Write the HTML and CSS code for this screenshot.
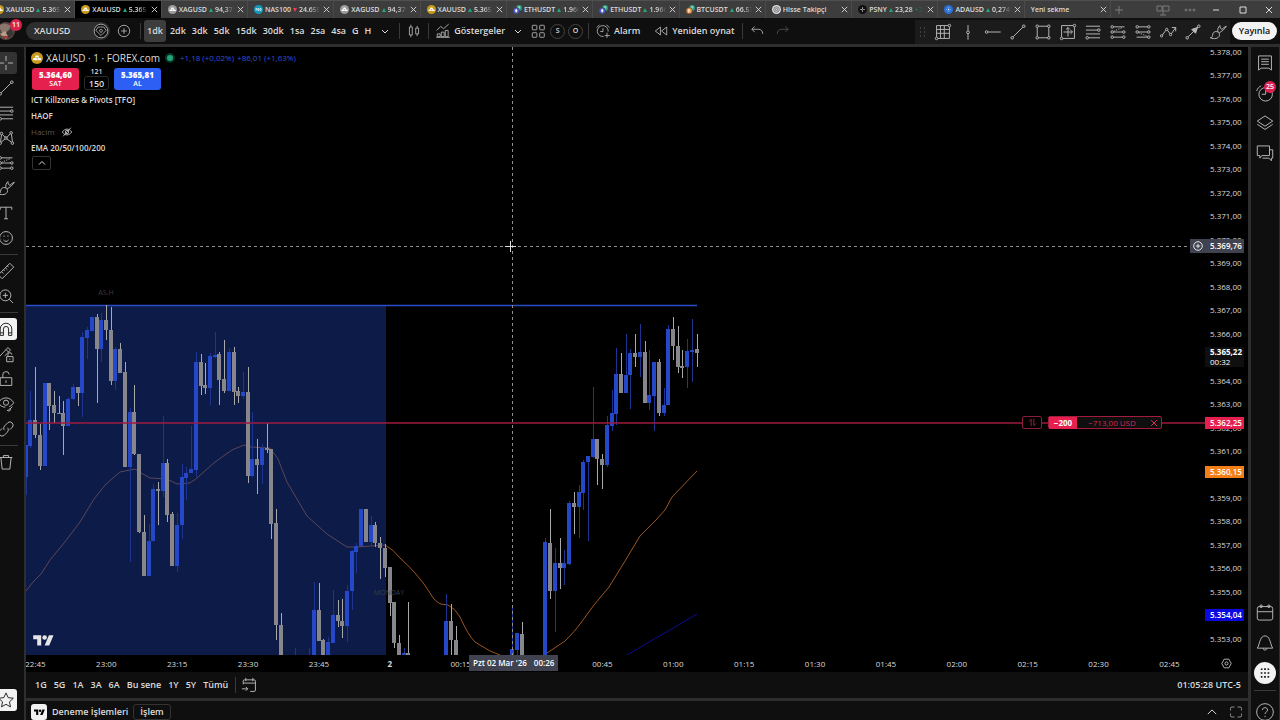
FILE: index.html
```html
<!DOCTYPE html>
<html lang="tr">
<head>
  <meta charset="UTF-8">
  <meta name="viewport" content="width=device-width, initial-scale=1.0">
  <title>XAUUSD</title>
  <link rel="stylesheet" href="styles.css">
</head>
<body>

<!-- icons -->
<svg class="sprite" aria-hidden="true">
  <symbol id="i-close" viewBox="0 0 10 10"><path d="M2 2l6 6M8 2l-6 6"/></symbol>
  <symbol id="i-down" viewBox="0 0 10 10"><path d="M2 4l3 3 3-3"/></symbol>
  <symbol id="i-up" viewBox="0 0 10 10"><path d="M2 6.500l3-3 3 3"/></symbol>
  <symbol id="i-swap" viewBox="0 0 10 10"><path d="M1 4l2.500-2.500V9M6.500 1v7.500L9 6"/></symbol>
  <symbol id="i-gold" viewBox="0 0 14 14"><circle cx="7" cy="7" r="7" fill="#c9991c" stroke="none"/><path d="M5.500 4h3l1 2.500h-5zM3 7h3.500l1 2.500H2zM7.800 7h3.500l1 2.500H7.500z" fill="#fff" stroke="none"/></symbol>
  <symbol id="i-silver" viewBox="0 0 14 14"><circle cx="7" cy="7" r="7" fill="#9c9c9f" stroke="none"/><path d="M5.500 4h3l1 2.500h-5zM3 7h3.500l1 2.500H2zM7.800 7h3.500l1 2.500H7.500z" fill="#fff" stroke="none"/></symbol>
  <symbol id="i-nas" viewBox="0 0 14 14"><circle cx="7" cy="7" r="7" fill="#1497b8" stroke="none"/><path d="M3 5.500v3M3 5.500h1.500v3M6 5.500h1.700v3H6zM9.300 5.500H11v3H9.300z" stroke="#fff"/></symbol>
  <symbol id="i-eth" viewBox="0 0 14 14"><circle cx="9.500" cy="4.500" r="4.500" fill="#26a17b" stroke="none"/><path d="M7.500 3h4M9.500 3v4" stroke="#fff"/><circle cx="5" cy="9" r="5" fill="#4f5bd5" stroke="#3d3d3d"/><path d="M5 5.500l2 3.500-2 3-2-3z" fill="#fff" stroke="none"/></symbol>
  <symbol id="i-btc" viewBox="0 0 14 14"><circle cx="9.500" cy="4.500" r="4.500" fill="#26a17b" stroke="none"/><path d="M7.500 3h4M9.500 3v4" stroke="#fff"/><circle cx="5" cy="9" r="5" fill="#f09035" stroke="#3d3d3d"/><path d="M4 6.500v5M4 7h1.700q1 1-.2 2H4m1.500 0q1.500 1 0 2H4" stroke="#fff"/></symbol>
  <symbol id="i-target" viewBox="0 0 14 14"><circle cx="7" cy="7" r="7" fill="#dcdcdc" stroke="none"/><circle cx="7" cy="7" r="4.300" stroke="#444"/><circle cx="7" cy="7" r="1.800" stroke="#444"/></symbol>
  <symbol id="i-psny" viewBox="0 0 14 14"><circle cx="7" cy="7" r="7" fill="#111" stroke="none"/><path d="M7 3.500v3M7 8v2.500M3.500 7h3M8 7h2.500" stroke="#fff"/></symbol>
  <symbol id="i-ada" viewBox="0 0 14 14"><circle cx="7" cy="7" r="7" fill="#2a6fd6" stroke="none"/><circle cx="7" cy="7" r="3" stroke="#cfe0ff" stroke-dasharray="1 1"/><circle cx="7" cy="7" r="1" fill="#fff" stroke="none"/></symbol>

  <symbol id="i-cross" viewBox="0 0 28 28"><path d="M14 3v8M14 17v8M3 14h8M17 14h8"/></symbol>
  <symbol id="i-trend" viewBox="0 0 28 28"><path d="M6.500 21.500l15-15"/><circle cx="5" cy="23" r="2"/><circle cx="23" cy="5" r="2"/></symbol>
  <symbol id="i-fib" viewBox="0 0 28 28"><path d="M3 5h22M3 11h18M3 17h22M7 23h18"/><circle cx="23" cy="11" r="2"/><circle cx="5" cy="23" r="2"/></symbol>
  <symbol id="i-pattern" viewBox="0 0 28 28"><path d="M5.500 20L7 9M8.500 8.500L12.500 13M15.500 13l5-5.500M22.500 8l1.500 12M6.500 20.500L12.500 15.500M15.500 15.500l7 5"/><circle cx="7" cy="7" r="2"/><circle cx="5" cy="22" r="2"/><circle cx="22" cy="6" r="2"/><circle cx="24" cy="22" r="2"/><circle cx="14" cy="14" r="2"/></symbol>
  <symbol id="i-forecast" viewBox="0 0 28 28"><path d="M7 6h17M7 14h14M7 22h14"/><path d="M7 13l14-6" stroke-dasharray="2 2"/><circle cx="5" cy="6" r="2"/><circle cx="5" cy="14" r="2"/><circle cx="5" cy="22" r="2"/><circle cx="23" cy="14" r="2"/><circle cx="23" cy="22" r="2"/></symbol>
  <symbol id="i-forecast2" viewBox="0 0 28 28"><path d="M7 6h14M7 14h14M4 22h17"/><path d="M7 15l14 6" stroke-dasharray="2 2"/><circle cx="5" cy="6" r="2"/><circle cx="5" cy="14" r="2"/><circle cx="23" cy="6" r="2"/><circle cx="23" cy="14" r="2"/><circle cx="23" cy="22" r="2"/></symbol>
  <symbol id="i-brush" viewBox="0 0 28 28"><path d="M2 23c4 0 3-3 4-6 1-4 6-5 9-2s1 8-4 9c-3 .500-6 .500-9-1zM14 14c-1-4 0-7 3-10 0 3 1 5 3 6 2-2 4-4 7-5-3 4-6 8-11 10"/></symbol>
  <symbol id="i-text" viewBox="0 0 28 28"><path d="M5 9V5h18v4M14 5v18M11 23h6"/></symbol>
  <symbol id="i-smile" viewBox="0 0 28 28"><circle cx="14" cy="14" r="10"/><path d="M10 17c2 3 6 3 8 0M11 10v2M17 10v2"/></symbol>
  <symbol id="i-ruler" viewBox="0 0 28 28"><path d="M2 20L20 2l6 6L8 26zM7 15l3 3M10 12l2 2M13 9l3 3M16 6l2 2"/></symbol>
  <symbol id="i-zoom" viewBox="0 0 28 28"><circle cx="13" cy="13" r="8.500"/><path d="M19 19l6 6M13 9v8M9 13h8"/></symbol>
  <symbol id="i-magnet" viewBox="0 0 28 28"><path d="M5 24V14a9 9 0 0 1 18 0v10h-5V14a4 4 0 0 0-8 0v10zM5 20h5M18 20h5"/></symbol>
  <symbol id="i-penlock" viewBox="0 0 28 28"><path d="M2 20L17 4l4 4-9 9M4 22l-2-2M14 7l4 4M15 18h10v8H15zM17 18v-3a3 3 0 0 1 6 0M20 21v2"/></symbol>
  <symbol id="i-lock" viewBox="0 0 28 28"><path d="M5 12h18v12H5zM9 12V8a5 5 0 0 1 10-1M14 16v4"/></symbol>
  <symbol id="i-eye" viewBox="0 0 28 28"><path d="M2 12c6-10 18-10 24 0-2 3-4 5-7 6M2 12c3 5 7 7 11 7"/><circle cx="14" cy="12" r="4"/><path d="M16 24c3 1 3-4 5-3l3-3M16 24c3 2 6 0 5-3"/></symbol>
  <symbol id="i-link" viewBox="0 0 28 28"><path d="M12 16l-1-1a5 5 0 0 1 1-6l5-5a5 5 0 0 1 7 7l-4 4M16 12l1 1a5 5 0 0 1-1 6l-5 5a5 5 0 0 1-7-7l4-4"/></symbol>
  <symbol id="i-trash" viewBox="0 0 28 28"><path d="M4 7h20M10 7V4h8v3M6 7l2 18h12l2-18"/></symbol>
  <symbol id="i-star" viewBox="0 0 28 28"><path d="M14 3l3.400 7.300 8 1-6 5.500 1.600 7.900-7-4-7 4 1.600-7.900-6-5.500 8-1z"/></symbol>

  <symbol id="i-plus" viewBox="0 0 28 28"><circle cx="14" cy="14" r="10"/><path d="M14 9v10M9 14h10"/></symbol>
  <symbol id="i-candles" viewBox="0 0 28 28"><path d="M6 7h5v14H6zM8.500 3v4M8.500 21v4M17 9h5v10h-5zM19.500 5v4M19.500 19v4"/></symbol>
  <symbol id="i-indicator" viewBox="0 0 28 28"><path d="M3 13l7-7 5 4 9-8M4 24v-5h5v5zM11 24v-8h5v8zM18 24V13h5v11zM2 25h24"/></symbol>
  <symbol id="i-layout" viewBox="0 0 28 28"><rect x="4" y="4" width="8" height="8" rx="1"/><rect x="17" y="4" width="8" height="8" rx="1"/><rect x="4" y="17" width="8" height="8" rx="1"/><rect x="17" y="17" width="8" height="8" rx="1"/></symbol>
  <symbol id="i-alarm" viewBox="0 0 28 28"><path d="M23 15a9.500 9.500 0 1 0-8 8.500M14 9v6H9M3 8l5-5M20 3l5 5M21 17v9M17 22h9"/></symbol>
  <symbol id="i-replay" viewBox="0 0 28 28"><path d="M13 7v14l-9-7zM24 7v14l-9-7z"/></symbol>
  <symbol id="i-undo" viewBox="0 0 28 28"><path d="M10 6l-5 5 5 5M5 11h12c4 0 7 3 7 8"/></symbol>
  <symbol id="i-redo" viewBox="0 0 28 28"><path d="M18 6l5 5-5 5M23 11H11c-4 0-7 3-7 8"/></symbol>
  <symbol id="i-grid" viewBox="0 0 28 28"><path d="M4 4h18M4 10h20M4 16h20M6 24h18M4 4v18M10 4v20M16 4v20M24 6v18"/><circle cx="24" cy="4" r="2"/><circle cx="4" cy="24" r="2"/></symbol>
  <symbol id="i-vline" viewBox="0 0 28 28"><path d="M14 3v9M14 17v9"/><circle cx="14" cy="14.500" r="2.200"/></symbol>
  <symbol id="i-hray" viewBox="0 0 28 28"><path d="M6 14h20"/><circle cx="4" cy="14" r="2"/></symbol>
  <symbol id="i-rect" viewBox="0 0 28 28"><path d="M7 5h14M7 23h14M5 7v14M23 7v14"/><circle cx="5" cy="5" r="2"/><circle cx="23" cy="5" r="2"/><circle cx="5" cy="23" r="2"/><circle cx="23" cy="23" r="2"/></symbol>
  <symbol id="i-range" viewBox="0 0 28 28"><path d="M4 4h18M6 24h18M4 4v18M24 6v18M14 7v14M7 14h14M11 10l3-3 3 3M18 11l3 3-3 3"/><circle cx="24" cy="4" r="2"/><circle cx="4" cy="24" r="2"/></symbol>
  <symbol id="i-wave" viewBox="0 0 28 28"><path d="M5 19l6-8M13 11l4.500 6M19 17l7-10M20 7h6v6"/><circle cx="4" cy="20" r="1.800"/><circle cx="12" cy="10" r="1.800"/><circle cx="18" cy="18" r="1.800"/></symbol>
  <symbol id="i-arrow" viewBox="0 0 28 28"><path d="M6.500 21.500l15-15"/><path d="M21 7l-3 9-6-6z" fill="currentColor"/><circle cx="5" cy="23" r="2"/><circle cx="23" cy="5" r="2"/></symbol>

  <symbol id="i-list" viewBox="0 0 28 28"><path d="M4 3h20v22l-4-3H8l-4 3zM8 8h12M8 12h12M8 16h12"/></symbol>
  <symbol id="i-clock" viewBox="0 0 28 28"><circle cx="15" cy="16" r="10.500"/><path d="M15 9v7h-6M1 11c1-4 4-7 7-8"/></symbol>
  <symbol id="i-layers" viewBox="0 0 28 28"><path d="M14 3l12 8-12 8-12-8zM2 16l12 8 12-8"/></symbol>
  <symbol id="i-chat" viewBox="0 0 28 28"><path d="M2 3h19v15H9l-3 4v-4H2zM21 9h5v13h-2v4l-4-4H10"/></symbol>
  <symbol id="i-calendar" viewBox="0 0 28 28"><rect x="2" y="4" width="24" height="21" rx="3"/><path d="M2 12h24"/><circle cx="8" cy="3.500" r="2"/><circle cx="20" cy="3.500" r="2"/></symbol>
  <symbol id="i-bell" viewBox="0 0 28 28"><path d="M2 22h24c-3-4-3-10-5-13-1-4-4-6-7-6s-6 2-7 6c-2 3-2 9-5 13zM11 22c0 4 6 4 6 0"/></symbol>
  <symbol id="i-apps" viewBox="0 0 28 28"><path d="M4 5h4M12 5h4M20 5h4M4 14h4M12 14h4M20 14h4M4 23h4M12 23h4M20 23h4" stroke-width="4"/></symbol>
  <symbol id="i-help" viewBox="0 0 28 28"><circle cx="14" cy="14" r="13"/><path d="M10 11c0-5 8-5 8 0 0 3-4 3-4 6M14 20v2"/></symbol>
  <symbol id="i-goto" viewBox="0 0 28 28"><path d="M5 13V8q0-2 2-2h15q2 0 2 2v14q0 2-2 2h-6M5 11h19M9 3v5M20 3v5M3 20h9M9 17l3 3-3 3"/></symbol>
  <symbol id="i-gem" viewBox="0 0 28 28"><circle cx="14" cy="14" r="12" fill="#0f0f0f"/><path d="M9 7h10l4 6-9 9-9-9zM11 13l3 4 3-4-3-2z"/></symbol>
  <symbol id="i-hidden" viewBox="0 0 28 28"><path d="M3 14c6-9 16-9 22 0-6 9-16 9-22 0zM5 24L23 4"/><circle cx="14" cy="14" r="4"/></symbol>
  <symbol id="i-gear" viewBox="0 0 28 28"><path d="M8 3h12l6 11-6 11H8L2 14z"/><circle cx="14" cy="14" r="4"/></symbol>
  <symbol id="i-tv" viewBox="0 0 36 28"><path d="M14 22H7V11H0V4h14zM28 22h-8l7.500-18h8z" fill="currentColor" stroke="none"/><circle cx="20" cy="8" r="4" fill="currentColor" stroke="none"/></symbol>
  <symbol id="i-full" viewBox="0 0 28 28"><path d="M3 11V7q0-3 3-3h5M17 4h5q3 0 3 3v4M25 17v4q0 3-3 3h-5M11 24H6q-3 0-3-3v-4"/></symbol>
</svg>

<!-- browser style tabs -->
<div class="tabbar">
  <div class="tabs">
    <div class="tab"><svg><use href="#i-gold"/></svg><b>XAUUSD</b><i class="up"></i><span>5.365,22</span><button aria-label="Kapat"><svg><use href="#i-close"/></svg></button></div>
    <div class="tab active"><svg><use href="#i-gold"/></svg><b>XAUUSD</b><i class="up"></i><span>5.365,22</span><button aria-label="Kapat"><svg><use href="#i-close"/></svg></button></div>
    <div class="tab"><svg><use href="#i-silver"/></svg><b>XAGUSD</b><i class="up"></i><span>94,370</span><button aria-label="Kapat"><svg><use href="#i-close"/></svg></button></div>
    <div class="tab"><svg><use href="#i-nas"/></svg><b>NAS100</b><i class="down"></i><span>24.655,</span><button aria-label="Kapat"><svg><use href="#i-close"/></svg></button></div>
    <div class="tab"><svg><use href="#i-silver"/></svg><b>XAGUSD</b><i class="up"></i><span>94,370</span><button aria-label="Kapat"><svg><use href="#i-close"/></svg></button></div>
    <div class="tab"><svg><use href="#i-gold"/></svg><b>XAUUSD</b><i class="up"></i><span>5.365,22</span><button aria-label="Kapat"><svg><use href="#i-close"/></svg></button></div>
    <div class="tab"><svg><use href="#i-eth"/></svg><b>ETHUSDT</b><i class="up"></i><span>1.966,</span><button aria-label="Kapat"><svg><use href="#i-close"/></svg></button></div>
    <div class="tab"><svg><use href="#i-eth"/></svg><b>ETHUSDT</b><i class="up"></i><span>1.966,</span><button aria-label="Kapat"><svg><use href="#i-close"/></svg></button></div>
    <div class="tab"><svg><use href="#i-btc"/></svg><b>BTCUSDT</b><i class="up"></i><span>66.577</span><button aria-label="Kapat"><svg><use href="#i-close"/></svg></button></div>
    <div class="tab"><svg><use href="#i-target"/></svg><b>Hisse Takipçi</b><span></span><button aria-label="Kapat"><svg><use href="#i-close"/></svg></button></div>
    <div class="tab"><svg><use href="#i-psny"/></svg><b>PSNY</b><i class="up"></i><span>23,28 <em>+25</em></span><button aria-label="Kapat"><svg><use href="#i-close"/></svg></button></div>
    <div class="tab"><svg><use href="#i-ada"/></svg><b>ADAUSD</b><i class="up"></i><span>0,2740</span><button aria-label="Kapat"><svg><use href="#i-close"/></svg></button></div>
    <div class="tab"><b>Yeni sekme</b><span></span><button aria-label="Kapat"><svg><use href="#i-close"/></svg></button></div>
  </div>
  <div class="window-controls">
    <button class="dim" aria-label="Yeni sekme"><svg viewBox="0 0 14 14"><path d="M7 3v8M3 7h8"/></svg></button>
    <button class="dim panes" aria-label="Paneller"><svg viewBox="0 0 14 14"><path d="M1 3h5v5H1zM7 3h6v5H7zM7 8v4M4 12h6"/></svg></button>
    <button class="dim" aria-label="Menü"><svg viewBox="0 0 14 14"><circle cx="3" cy="7" r="1"/><circle cx="7" cy="7" r="1"/><circle cx="11" cy="7" r="1"/></svg></button>
    <button aria-label="Küçült"><svg viewBox="0 0 14 14"><path d="M4 7h6"/></svg></button>
    <button aria-label="Büyüt"><svg viewBox="0 0 14 14"><path d="M4 4h6v6H4z"/></svg></button>
    <button aria-label="Kapat"><svg viewBox="0 0 14 14"><path d="M4 4l6 6M10 4l-6 6"/></svg></button>
  </div>
</div>

<!-- top toolbar -->
<header class="toolbar">
  <a class="avatar" href="#" aria-label="Profil"><svg viewBox="0 0 18 18"><circle cx="9" cy="9" r="9" fill="#5b4640" stroke="none"/><g stroke="none"><path d="M2 4q5-5 12 0l-3 5-6 2z" fill="#8b766c"/><path d="M3 12l5-3 4 4-3 4z" fill="#b59d8e"/><path d="M9 11l5-4 3 5-5 4z" fill="#3b3634"/><path d="M6 14h5v2H6z" fill="#a33"/></g></svg><span class="count">11</span></a>
  <button class="symbol-search">XAUUSD <svg class="icon"><use href="#i-gem"/></svg></button>
  <button class="icon-btn" aria-label="Karşılaştır"><svg class="icon"><use href="#i-plus"/></svg></button>
  <span class="sep"></span>
  <nav class="intervals">
    <button class="active">1dk</button>
    <button>2dk</button>
    <button>3dk</button>
    <button>5dk</button>
    <button>15dk</button>
    <button>30dk</button>
    <button>1sa</button>
    <button>2sa</button>
    <button>4sa</button>
    <button>G</button>
    <button>H</button>
    <button class="more" aria-label="Zaman aralığı"><svg class="chev"><use href="#i-down"/></svg></button>
  </nav>
  <span class="sep"></span>
  <button class="icon-btn" aria-label="Mumlar"><svg class="icon"><use href="#i-candles"/></svg></button>
  <span class="sep"></span>
  <button class="tool"><svg class="icon"><use href="#i-indicator"/></svg>Göstergeler</button>
  <button class="icon-btn" aria-label="Şablonlar"><svg class="chev"><use href="#i-down"/></svg></button>
  <button class="icon-btn" aria-label="Düzen"><svg class="icon"><use href="#i-layout"/></svg></button>
  <button class="round">S</button>
  <button class="round">O</button>
  <span class="sep"></span>
  <button class="tool"><svg class="icon"><use href="#i-alarm"/></svg>Alarm</button>
  <button class="tool"><svg class="icon"><use href="#i-replay"/></svg>Yeniden oynat</button>
  <span class="sep"></span>
  <button class="icon-btn" aria-label="Geri al"><svg class="icon"><use href="#i-undo"/></svg></button>
  <button class="icon-btn off" aria-label="Yinele"><svg class="icon"><use href="#i-redo"/></svg></button>

  <div class="favorites">
    <svg class="grip" viewBox="0 0 8 12"><path d="M1 2h1M5 2h1M1 6h1M5 6h1M1 10h1M5 10h1"/></svg>
    <button aria-label="Izgara"><svg class="icon"><use href="#i-grid"/></svg></button>
    <button aria-label="Dikey çizgi"><svg class="icon"><use href="#i-vline"/></svg></button>
    <button aria-label="Yatay ışın"><svg class="icon"><use href="#i-hray"/></svg></button>
    <button aria-label="Trend çizgisi"><svg class="icon"><use href="#i-trend"/></svg></button>
    <button aria-label="Dikdörtgen"><svg class="icon"><use href="#i-rect"/></svg></button>
    <button aria-label="Aralık"><svg class="icon"><use href="#i-range"/></svg></button>
    <button aria-label="Fibonacci"><svg class="icon"><use href="#i-fib"/></svg></button>
    <button aria-label="Uzun pozisyon"><svg class="icon"><use href="#i-forecast"/></svg></button>
    <button aria-label="Kısa pozisyon"><svg class="icon"><use href="#i-forecast2"/></svg></button>
    <button aria-label="Yol"><svg class="icon"><use href="#i-wave"/></svg></button>
    <button aria-label="Ok"><svg class="icon"><use href="#i-arrow"/></svg></button>
    <button aria-label="Fırça"><svg class="icon"><use href="#i-brush"/></svg></button>
  </div>
  <button class="publish">Yayınla</button>
</header>

<main class="workspace">
  <!-- drawing tools -->
  <aside class="rail left">
    <button class="pressed" aria-label="İmleç"><svg class="icon"><use href="#i-cross"/></svg></button>
    <button aria-label="Trend çizgisi"><svg class="icon"><use href="#i-trend"/></svg></button>
    <button aria-label="Fibonacci"><svg class="icon"><use href="#i-fib"/></svg></button>
    <button aria-label="Formasyon"><svg class="icon"><use href="#i-pattern"/></svg></button>
    <button aria-label="Tahmin"><svg class="icon"><use href="#i-forecast"/></svg></button>
    <button aria-label="Fırça"><svg class="icon"><use href="#i-brush"/></svg></button>
    <button aria-label="Metin"><svg class="icon"><use href="#i-text"/></svg></button>
    <button aria-label="Simgeler"><svg class="icon"><use href="#i-smile"/></svg></button>
    <hr>
    <button aria-label="Cetvel"><svg class="icon"><use href="#i-ruler"/></svg></button>
    <button aria-label="Yakınlaştır"><svg class="icon"><use href="#i-zoom"/></svg></button>
    <hr>
    <button class="white" aria-label="Mıknatıs"><svg class="icon"><use href="#i-magnet"/></svg></button>
    <button aria-label="Çizim modu"><svg class="icon"><use href="#i-penlock"/></svg></button>
    <button aria-label="Kilitle"><svg class="icon"><use href="#i-lock"/></svg></button>
    <button aria-label="Gizle"><svg class="icon"><use href="#i-eye"/></svg></button>
    <button aria-label="Bağla"><svg class="icon"><use href="#i-link"/></svg></button>
    <hr>
    <button aria-label="Sil"><svg class="icon"><use href="#i-trash"/></svg></button>
    <button class="white last" aria-label="Favoriler"><svg class="icon"><use href="#i-star"/></svg></button>
  </aside>

  <div class="center">
    <section class="chart">
      <div class="plot">
        <svg class="canvas">
          <g id="scene" transform="translate(-26 -47)">
            <path class="ema" d="M26 591L33 582 41 574 50 560 64 543 80 522 94 499 106 484 120 472 135 469 141 473 150 478 167 479 177 484 190 483 197 478 215 462 232 450 244 445 250 447 270 448 278 459 287 482 307 516 327 534 347 547 357 547 385 545Q393 549 400 558 408 565 415 573 424 583 430 593 435 602 441 604L448 605Q455 608 460 617 468 635 475 642L490 651 500 655M547 653L565 641Q575 631 580 624L594 605 609 587 625 561 640 536 656 520 665 510 672 497 697 471"/>
            <path class="ema-slow" d="M627 655L697 614"/>
            <rect class="session" x="26" y="305" width="360" height="350"/>
            <path class="high" d="M26 305.500H697"/>
            <g id="candles"></g>
            <path class="order-line" d="M26 423H4000"/>
            <text x="106" y="295">AS.H</text>
            <text x="389" y="595">MONDAY</text>
            <path class="cross" d="M26 246.500H4000M512.500 47V4000"/>
            <path class="cursor" d="M505 246.500h11M510.500 241v11"/>
          </g>
        </svg>

        <div class="legend">
          <div class="title"><svg class="logo"><use href="#i-gold"/></svg><h1>XAUUSD · 1 · FOREX.com</h1><i class="status"></i><span class="change">+1,18 (+0,02%)</span><span class="change">+86,01 (+1,63%)</span></div>
          <div class="trade">
            <button class="sell"><b>5.364,60</b>SAT</button>
            <label class="qty">121<input type="text" value="150"></label>
            <button class="buy"><b>5.365,81</b>AL</button>
          </div>
          <ul>
            <li>ICT Killzones &amp; Pivots [TFO]</li>
            <li>HAOF</li>
            <li class="muted">Hacim <svg class="eye"><use href="#i-hidden"/></svg></li>
            <li>EMA 20/50/100/200</li>
          </ul>
          <button class="collapse" aria-label="Göstergeleri gizle"><svg class="chev"><use href="#i-up"/></svg></button>
        </div>

        <div class="order">
          <button class="side" aria-label="Ters çevir"><svg class="chev"><use href="#i-swap"/></svg></button>
          <div class="position"><b>−200</b><span>−713,00 USD</span><button aria-label="Pozisyonu kapat"><svg class="chev"><use href="#i-close"/></svg></button></div>
        </div>
        <svg class="tv-logo"><use href="#i-tv"/></svg>
      </div>

      <div class="price-axis">
        <ol id="prices"></ol>
        <div class="tag cursor-tag"><svg><use href="#i-plus"/></svg><span>5.369,76</span></div>
        <div class="tag last-tag"><b>5.365,22</b>00:32</div>
        <div class="tag order-tag">5.362,25</div>
        <div class="tag ema-tag">5.360,15</div>
        <div class="tag slow-tag">5.354,04</div>
      </div>
    </section>

    <div class="time-axis">
      <div class="times">
        <ol>
          <li>22:45</li><li>23:00</li><li>23:15</li><li>23:30</li><li>23:45</li><li><b>2</b></li><li>00:15</li><li>00:30</li><li>00:45</li><li>01:00</li><li>01:15</li><li>01:30</li><li>01:45</li><li>02:00</li><li>02:15</li><li>02:30</li><li>02:45</li>
        </ol>
        <div class="time-tag"><span>Pzt 02 Mar '26</span><span>00:26</span></div>
      </div>
      <button class="gear" aria-label="Ayarlar"><svg><use href="#i-gear"/></svg></button>
    </div>

    <div class="ranges">
      <button>1G</button>
      <button>5G</button>
      <button>1A</button>
      <button>3A</button>
      <button>6A</button>
      <button>Bu sene</button>
      <button>1Y</button>
      <button>5Y</button>
      <button>Tümü</button>
      <span class="sep"></span>
      <button aria-label="Tarihe git"><svg class="icon"><use href="#i-goto"/></svg></button>
      <span class="clock">01:05:28 UTC-5</span>
    </div>

    <footer class="account">
      <span class="badge"><svg><use href="#i-tv"/></svg></span>
      <a href="#">Deneme İşlemleri</a>
      <button class="deal">İşlem</button>
      <button class="icon-only" aria-label="Paneli aç"><svg class="chev"><use href="#i-up"/></svg></button>
      <button class="icon-only" aria-label="Tam ekran"><svg class="icon"><use href="#i-full"/></svg></button>
    </footer>
  </div>

  <!-- widget bar -->
  <aside class="rail right">
    <button aria-label="İzleme listesi"><svg class="icon"><use href="#i-list"/></svg></button>
    <button aria-label="Alarmlar"><svg class="icon"><use href="#i-clock"/></svg><span class="count">25</span></button>
    <button aria-label="Nesneler"><svg class="icon"><use href="#i-layers"/></svg></button>
    <button aria-label="Sohbet"><svg class="icon"><use href="#i-chat"/></svg></button>
    <button class="last" aria-label="Takvim"><svg class="icon"><use href="#i-calendar"/></svg></button>
    <button aria-label="Bildirimler"><svg class="icon"><use href="#i-bell"/></svg></button>
    <button class="apps" aria-label="Ürünler"><svg class="icon"><use href="#i-apps"/></svg></button>
    <hr>
    <button aria-label="Yardım"><svg class="icon"><use href="#i-help"/></svg></button>
  </aside>
</main>

<script src="script.js"></script>
</body>
</html>
```
FILE: styles.css
```css
:root {
  --bg: #0f0f0f;
  --line: #2e2e2e;
  --text: #dbdbdb;
  --icon: #b8b8b8;
  --red: #e5204f;
  --blue: #2d5ff5;
}

* {
  box-sizing: border-box;
}

body {
  margin: 0;
  height: 100vh;
  display: flex;
  flex-direction: column;
  overflow: hidden;
  background: var(--bg);
  color: var(--text);
  font: 600 9px/12px "Open Sans", "Noto Sans", sans-serif;
}

button,
input {
  font: inherit;
  color: inherit;
  background: none;
  border: 0;
  padding: 0;
  margin: 0;
}

button {
  display: flex;
  align-items: center;
  justify-content: center;
  white-space: nowrap;
}

a {
  color: inherit;
  text-decoration: none;
}

ol,
ul {
  list-style: none;
  margin: 0;
  padding: 0;
}

svg {
  fill: none;
  stroke: currentColor;
  flex: none;
}

.sprite {
  display: none;
}

.icon {
  width: 18px;
  height: 18px;
  color: var(--icon);
  stroke-width: 1.5;
}

.chev {
  width: 10px;
  height: 10px;
}

.sep {
  width: 1px;
  height: 16px;
  background: #393939;
}

.count {
  position: absolute;
  top: -3px;
  left: 10px;
  min-width: 12px;
  padding: 0 2px;
  border-radius: 6px;
  background: #d9224f;
  color: #fff;
  font-size: 7px;
  line-height: 12px;
  text-align: center;
}

/* tabs */
.tabbar {
  display: flex;
  height: 18px;
  background: #3d3d3d;
  border-top: 1px solid #505050;
  font-size: 7px;
}

.tabs {
  flex: 1;
  display: flex;
  margin-left: -11px;
  min-width: 0;
}

.tab {
  flex: 1 1 0;
  min-width: 0;
  display: flex;
  align-items: center;
  gap: 2px;
  padding: 0 2px 0 6px;
  border-right: 1px solid #4a4a4a;
}

.tab.active {
  background: #000;
}

.tab > svg {
  width: 9px;
  height: 9px;
}

.tab b {
  font-weight: 600;
  white-space: nowrap;
}

.tab span {
  flex: 1;
  min-width: 0;
  overflow: hidden;
  white-space: nowrap;
  mask-image: linear-gradient(90deg, #000 50%, transparent);
}

.tab em {
  color: #20a67a;
  font-style: normal;
}

.tab button svg {
  width: 9px;
  height: 9px;
}

.up,
.down {
  border: 2px solid transparent;
  border-bottom: 4px solid #20a67a;
  border-top: 0;
}

.down {
  border-bottom: 0;
  border-top: 4px solid #f23655;
}

.window-controls {
  width: 169px;
  display: flex;
  align-items: center;
  justify-content: space-between;
  padding: 0 4px 0 1px;
}

.window-controls svg {
  width: 14px;
  height: 14px;
}

.window-controls .dim {
  color: #7a7a7a;
}

.window-controls .panes {
  margin-left: 18px;
}

/* toolbar */
.toolbar {
  display: flex;
  align-items: center;
  height: 29px;
  padding-right: 3px;
  border-bottom: 3px solid var(--line);
}

.toolbar .icon {
  width: 16px;
  height: 16px;
}

.avatar {
  position: relative;
  margin-left: -3px;
  width: 18px;
  height: 18px;
}

.avatar .count {
  left: 13px;
}

.symbol-search {
  width: 84px;
  height: 18px;
  margin: 0 4px 0 11px;
  padding: 0 1px 0 8px;
  border-radius: 9px;
  background: #2e2e2e;
  justify-content: space-between;
}

.icon-btn {
  width: 20px;
  height: 22px;
}

.toolbar > .sep {
  margin: 0 4px;
}

.toolbar > .symbol-search + .icon-btn + .sep {
  margin: 0 3px 0 6px;
}

.intervals {
  display: flex;
}

.intervals button {
  height: 22px;
  padding: 0 3px;
  border-radius: 3px;
}

.intervals .active {
  margin-right: 1px;
  background: #3d3d3d;
}

.intervals .more {
  padding: 0 5px 0 6px;
}

.tool {
  gap: 3px;
  padding: 0 3px 0 2px;
}

.tool + .tool {
  margin-left: 8px;
}

.round {
  width: 15px;
  height: 15px;
  margin: 0 1px 0 2px;
  border: 1px solid #444;
  border-radius: 50%;
  font-size: 7px;
}

.off {
  margin-left: 6px;
  opacity: .4;
}

.favorites {
  display: flex;
  align-items: center;
  gap: 7px;
  height: 24px;
  margin: 2px 2px 0 auto;
  padding: 0 3px 0 4px;
  background: #1b1b1b;
}

.favorites .icon {
  width: 18px;
  height: 18px;
}

.grip {
  width: 8px;
  height: 12px;
  color: #666;
}

.publish {
  width: 45px;
  height: 18px;
  border-radius: 9px;
  background: #f2f2f2;
  color: #0f0f0f;
}

/* workspace */
.workspace {
  flex: 1;
  min-height: 0;
  display: flex;
}

.rail {
  flex: none;
  display: flex;
  flex-direction: column;
  gap: 3px;
}

.rail .last {
  margin-top: auto;
}

.rail hr {
  width: 18px;
  height: 1px;
  margin: 2px 0;
  border: 0;
  background: #3a3a3a;
}

.left {
  width: 26px;
  padding: 5px 0 9px;
  border-right: 2px solid var(--line);
}

.left button {
  width: 22px;
  height: 22px;
  margin-left: -5px;
  border-radius: 3px;
}

.left .pressed {
  background: #333;
}

.left .white {
  background: #f2f2f2;
}

.left .white .icon {
  color: #222;
}

.right {
  width: 32px;
  align-items: center;
  gap: 5px;
  padding: 3px 0 0;
  border-left: 3px solid var(--line);
  border-right: 1px solid var(--line);
}

.right button {
  position: relative;
  width: 26px;
  height: 25px;
}

.right hr {
  width: 22px;
  margin: 0 0 3px;
}

.right .apps .icon {
  width: 22px;
  height: 22px;
  padding: 5px;
  border-radius: 50%;
  background: #f2f2f2;
  color: #111;
}

.right .count {
  top: 1px;
  left: 12px;
}

.right hr + button {
  margin-bottom: -4px;
}

.center {
  flex: 1;
  min-width: 0;
  display: flex;
  flex-direction: column;
}

.chart {
  flex: 1;
  min-height: 0;
  display: flex;
  background: #000;
}

.plot {
  position: relative;
  flex: 1;
  min-width: 0;
}

.canvas {
  position: absolute;
  width: 100%;
  height: 100%;
}

.canvas text {
  fill: #3c3c44;
  stroke: none;
  font-size: 7px;
  font-weight: 400;
  text-anchor: middle;
}

.ema {
  stroke: #9c5520;
}

.ema-slow {
  stroke: #0c0c98;
}

.session {
  fill: #1a3590;
  fill-opacity: .5;
  stroke: none;
}

.high {
  stroke: #2a4cc8;
  stroke-width: 1.5;
}

.order-line {
  stroke: #9c1b3f;
  stroke-width: 1.6;
}

.cross {
  stroke: #909090;
  stroke-dasharray: 3 3;
}

.cursor {
  stroke: #ddd;
}

.body-up {
  fill: #2448c8;
  stroke: none;
}

.body-down {
  fill: #87878b;
  stroke: none;
}

.wick-up {
  fill: #1d3590;
  stroke: none;
}

.wick-down {
  fill: #a9a9a9;
  stroke: none;
}

/* legend over the chart */
.legend {
  position: absolute;
  top: 3px;
  left: 5px;
  font-size: 8px;
}

.title {
  display: flex;
  align-items: center;
  gap: 3px;
  height: 16px;
}

.title h1 {
  margin: 0;
  font-size: 10px;
  font-weight: 500;
}

.logo {
  width: 12px;
  height: 12px;
}

.status {
  width: 6px;
  height: 6px;
  margin: 0 4px;
  border-radius: 50%;
  background: #20a67a;
  box-shadow: 0 0 0 2px #0a3327;
}

.change {
  color: #2d50dc;
  font-weight: 500;
}

.trade {
  display: flex;
  gap: 5px;
  margin: 2px 0 2px 1px;
}

.sell,
.buy {
  flex-direction: column;
  width: 47px;
  height: 22px;
  border-radius: 3px;
  background: var(--red);
  color: #fff;
  font-size: 7px;
  line-height: 9px;
}

.sell b,
.buy b {
  font-size: 8px;
}

.buy {
  background: var(--blue);
}

.qty {
  width: 25px;
  font-size: 7px;
  line-height: 7px;
  text-align: center;
}

.qty input {
  width: 25px;
  height: 14px;
  margin-top: 1px;
  border: 1px solid #2a2a2a;
  border-radius: 3px;
  font-size: 9px;
  text-align: center;
}

.legend li {
  display: flex;
  align-items: center;
  gap: 6px;
  height: 16px;
}

.legend .muted {
  color: #5a5a5a;
  font-weight: 500;
}

.eye {
  width: 12px;
  height: 12px;
  color: #ccc;
  stroke-width: 2;
}

.collapse {
  width: 19px;
  height: 14px;
  margin-left: 1px;
  border: 1px solid #333;
  border-radius: 2px;
}

.order {
  position: absolute;
  top: 369px;
  right: 43px;
  display: flex;
  gap: 6px;
  color: #d42856;
  font-size: 8px;
  font-weight: 500;
}

.order .side {
  width: 20px;
  border: 1px solid #8a1d3b;
  border-radius: 2px;
  background: #000;
}

.side .chev {
  width: 9px;
  height: 9px;
  stroke-width: .8;
}

.position {
  display: flex;
  align-items: center;
  height: 13px;
  border: 1px solid #a31c40;
  border-radius: 2px;
  background: #0f0f0f;
}

.position b {
  width: 28px;
  background: var(--red);
  color: #fff;
  text-align: center;
}

.position span {
  width: 70px;
  text-align: center;
}

.position button {
  width: 14px;
}

.tv-logo {
  position: absolute;
  left: 7px;
  bottom: 6px;
  width: 21px;
  height: 16px;
  color: #e6e6e6;
}

/* axes */
.price-axis {
  position: relative;
  width: 43px;
  font-size: 8px;
  font-weight: 500;
}

.price-axis ol {
  display: flex;
  flex-direction: column;
  justify-content: space-between;
  height: 100%;
  padding: 0 0 11px 5px;
  line-height: 10px;
}

.tag {
  position: absolute;
  left: 0;
  right: 4px;
  padding-left: 5px;
  color: #fff;
  font-weight: 600;
}

.cursor-tag {
  top: 192px;
  left: -15px;
  padding-left: 2px;
  display: flex;
  align-items: center;
  gap: 6px;
  background: #40434f;
  line-height: 14px;
}

.cursor-tag svg {
  width: 12px;
  height: 12px;
  stroke-width: 2;
}

.last-tag {
  top: 300px;
  background: #0f0f0f;
  line-height: 10px;
  font-weight: 500;
}

.last-tag b {
  display: block;
}

.order-tag {
  top: 370px;
  background: var(--red);
}

.ema-tag {
  top: 419px;
  background: #f57f17;
}

.slow-tag {
  top: 562px;
  background: #0a0ae0;
}

.time-axis {
  display: flex;
  height: 17px;
  background: #000;
  font-size: 8px;
  font-weight: 500;
}

.times {
  position: relative;
  flex: 1;
  min-width: 0;
  overflow: hidden;
}

.times ol {
  display: flex;
  margin-left: -26px;
}

.times li {
  flex: 1 1 0;
  line-height: 17px;
  text-align: center;
}

.time-tag {
  position: absolute;
  top: 0;
  left: 443px;
  display: flex;
  gap: 7px;
  padding: 0 4px;
  background: #40434f;
  color: #fff;
  font-weight: 600;
  line-height: 16px;
}

.gear {
  width: 43px;
}

.gear svg {
  width: 11px;
  height: 11px;
  stroke-width: 2;
}

/* bottom bars */
.ranges {
  display: flex;
  align-items: center;
  gap: 7px;
  height: 26px;
  padding: 0 7px 0 9px;
}

.ranges .sep {
  margin-right: -3px;
}

.clock {
  margin-left: auto;
}

.account {
  display: flex;
  align-items: center;
  gap: 5px;
  height: 22px;
  padding: 3px 3px 0 5px;
  border-top: 3px solid var(--line);
}

.badge {
  width: 16px;
  height: 16px;
  display: flex;
  align-items: center;
  justify-content: center;
  border-radius: 3px;
  background: #f2f2f2;
  color: #000;
}

.badge svg {
  width: 11px;
  height: 9px;
}

.deal {
  height: 16px;
  margin-right: auto;
  padding: 0 6px;
  border: 1px solid #333;
  border-radius: 3px;
}

.account .icon,
.account .chev {
  width: 14px;
  height: 14px;
}

.account .chev {
  stroke-width: .7;
}

.icon-only {
  width: 19px;
}
```
FILE: script.js
```js
// minute from 23:00, direction, high, body top, body bottom, low
const bars = [
  [-17, 'u', 445, 445, 477, 495], [-16, 'u', 391, 420, 446, 448], [-15, 'd', 367, 420, 435, 438],
  [-14, 'd', 424, 435, 466, 470], [-13, 'u', 383, 383, 466, 466], [-12, 'd', 383, 383, 406, 430],
  [-11, 'd', 391, 405, 413, 423], [-10, 'd', 396, 413, 414, 414], [-9, 'd', 401, 413, 426, 455],
  [-8, 'u', 397, 399, 426, 426], [-7, 'u', 384, 387, 399, 400], [-6, 'd', 387, 387, 393, 406],
  [-5, 'u', 332, 337, 393, 417], [-4, 'u', 327, 330, 338, 359], [-3, 'u', 317, 317, 331, 331],
  [-2, 'd', 314, 317, 349, 403], [-1, 'u', 313, 320, 349, 362], [0, 'd', 305, 320, 330, 340],
  [1, 'd', 307, 330, 381, 385], [2, 'u', 347, 349, 381, 390], [3, 'd', 343, 349, 373, 373],
  [4, 'd', 362, 372, 467, 467], [5, 'u', 408, 412, 467, 562], [6, 'd', 385, 412, 454, 455],
  [7, 'd', 454, 454, 532, 533], [8, 'd', 515, 532, 576, 576], [9, 'u', 524, 541, 576, 576],
  [10, 'u', 484, 489, 541, 541], [11, 'd', 482, 489, 491, 525], [12, 'u', 416, 463, 491, 497],
  [13, 'd', 459, 463, 515, 522], [14, 'd', 512, 514, 566, 566], [15, 'u', 513, 525, 566, 572],
  [16, 'u', 464, 477, 525, 539], [17, 'u', 467, 473, 478, 500], [18, 'u', 426, 469, 473, 473],
  [19, 'u', 352, 362, 470, 477], [20, 'd', 354, 362, 386, 395], [21, 'd', 363, 385, 388, 394],
  [22, 'u', 353, 356, 388, 405], [23, 'u', 332, 355, 357, 358], [24, 'd', 352, 354, 380, 405],
  [25, 'd', 340, 379, 391, 393], [26, 'u', 348, 352, 391, 391], [27, 'd', 347, 352, 392, 405],
  [28, 'd', 387, 391, 396, 403], [29, 'u', 372, 392, 396, 399], [30, 'd', 367, 392, 476, 483],
  [31, 'u', 412, 459, 476, 477], [32, 'd', 439, 459, 465, 494], [33, 'u', 444, 448, 465, 484],
  [34, 'd', 423, 448, 450, 453], [35, 'd', 449, 449, 524, 539], [36, 'd', 509, 523, 625, 640],
  [37, 'd', 613, 625, 655, 655], [40, 'u', 648, 655, 655, 655], [43, 'u', 648, 655, 655, 655],
  [44, 'u', 582, 610, 655, 655], [45, 'd', 583, 610, 641, 641], [46, 'd', 639, 640, 655, 655],
  [47, 'u', 637, 642, 655, 655], [48, 'u', 590, 615, 643, 643], [49, 'd', 600, 615, 621, 627],
  [50, 'd', 599, 621, 626, 638], [51, 'u', 585, 591, 626, 642], [52, 'u', 550, 551, 591, 610],
  [53, 'u', 543, 546, 552, 573], [54, 'u', 509, 509, 546, 546], [55, 'd', 509, 509, 542, 542],
  [56, 'u', 516, 525, 542, 546], [57, 'd', 522, 525, 543, 547], [58, 'd', 537, 543, 548, 579],
  [59, 'd', 544, 548, 568, 577], [60, 'd', 567, 567, 603, 616], [61, 'd', 602, 602, 643, 648],
  [62, 'd', 635, 643, 655, 655], [63, 'u', 648, 653, 655, 655], [64, 'd', 602, 653, 655, 655],
  [72, 'u', 594, 621, 655, 655], [73, 'd', 604, 621, 640, 655], [74, 'd', 626, 640, 655, 655],
  [86, 'u', 607, 649, 655, 655], [87, 'u', 633, 633, 650, 655], [88, 'd', 622, 634, 655, 655],
  [93, 'u', 538, 542, 655, 655], [94, 'd', 509, 543, 591, 599], [95, 'u', 548, 563, 591, 632],
  [96, 'd', 538, 563, 568, 589], [97, 'u', 550, 563, 568, 585], [98, 'u', 501, 503, 564, 565],
  [99, 'd', 492, 503, 507, 534], [100, 'u', 485, 492, 507, 538], [101, 'u', 460, 462, 493, 510],
  [102, 'u', 456, 456, 462, 541], [103, 'u', 387, 439, 457, 458], [104, 'd', 439, 439, 459, 485],
  [105, 'd', 454, 459, 465, 489], [106, 'u', 416, 425, 465, 467], [107, 'u', 390, 413, 426, 431],
  [108, 'u', 348, 374, 414, 425], [109, 'd', 353, 374, 393, 393], [110, 'u', 334, 375, 393, 393],
  [111, 'u', 349, 353, 375, 409], [112, 'd', 334, 353, 357, 367], [113, 'u', 324, 352, 357, 377],
  [114, 'd', 341, 352, 403, 403], [115, 'u', 350, 395, 403, 410], [116, 'u', 362, 362, 396, 431],
  [117, 'd', 359, 362, 413, 416], [118, 'u', 388, 405, 413, 416], [119, 'u', 325, 329, 405, 405],
  [120, 'd', 317, 329, 346, 360], [121, 'd', 326, 346, 367, 373], [122, 'd', 350, 366, 368, 378],
  [123, 'u', 339, 351, 367, 388], [124, 'u', 319, 350, 352, 382], [125, 'd', 334, 349, 353, 367]
];

const firstX = 106;
const step = 4.725;
const candles = document.getElementById('candles');

function addRect(cls, x, y, width, height) {
  const rect = document.createElementNS('http://www.w3.org/2000/svg', 'rect');
  rect.setAttribute('class', cls);
  rect.setAttribute('x', x);
  rect.setAttribute('y', y);
  rect.setAttribute('width', width);
  rect.setAttribute('height', height);
  candles.appendChild(rect);
}

bars.forEach(([minute, dir, high, top, bottom, low]) => {
  const x = Math.round(firstX + minute * step);
  const side = dir === 'u' ? 'up' : 'down';
  addRect('wick-' + side, x, high, 1, low - high);
  if (bottom > top) {
    addRect('body-' + side, x - 2, top, 4, bottom - top);
  }
});

// price scale
const prices = document.getElementById('prices');
for (let p = 378; p >= 353; p--) {
  const li = document.createElement('li');
  li.textContent = '5.' + p + ',00';
  prices.appendChild(li);
}
```
